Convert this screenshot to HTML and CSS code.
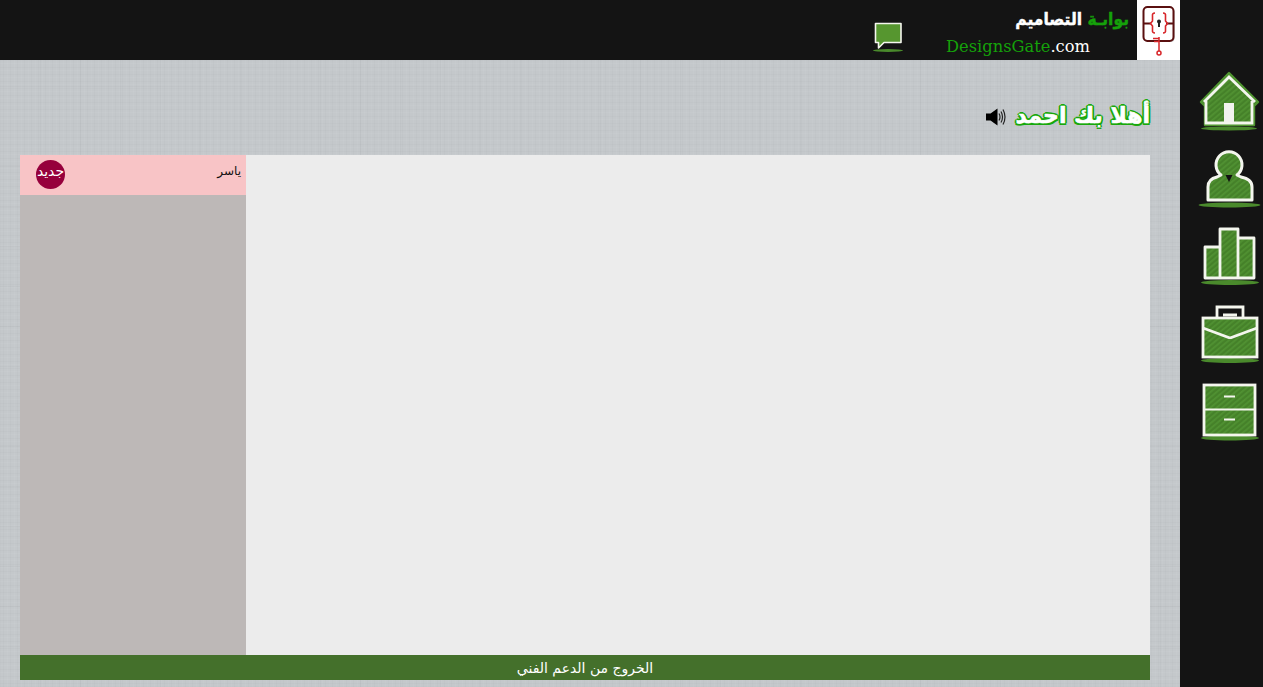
FILE: index.html
```html
<!DOCTYPE html>
<html lang="ar">
<head>
<meta charset="utf-8">
<title>بوابة التصاميم</title>
<link rel="stylesheet" href="styles.css">
</head>
<body>
<svg class="defs" width="0" height="0" aria-hidden="true">
  <defs>
    <pattern id="scribble" width="4" height="4" patternUnits="userSpaceOnUse" patternTransform="rotate(-40)">
      <rect width="4" height="4" fill="#4a892c"/>
      <rect y=".5" width="4" height="1" fill="#3f7a25"/>
      <rect y="2.500" width="4" height=".8" fill="#589a38"/>
    </pattern>
    <filter id="chalk" x="-10%" y="-10%" width="120%" height="120%">
      <feTurbulence type="fractalNoise" baseFrequency=".4" numOctaves="2" seed="4" result="n"/>
      <feDisplacementMap in="SourceGraphic" in2="n" scale="1.400" xChannelSelector="R" yChannelSelector="G"/>
      <feGaussianBlur stdDeviation=".45"/>
    </filter>
  </defs>
</svg>
<div class="page">
  <div class="main">
    <header class="topbar">
      <svg class="chat" width="32" height="32" viewBox="0 0 32 32">
        <ellipse cx="16" cy="29.500" rx="15" ry="1.500" fill="#4a8a2c"/>
        <path d="M3.500 2.500H29V21.500H12L6.500 27V21.500H3.500Z" fill="#56962f" stroke="#f4f6ee" stroke-width="1.600" stroke-linejoin="round"/>
      </svg>
      <div class="brand">
        <div class="brand-ar"><span class="g">بوابـة</span> التصاميم</div>
        <div class="brand-en" dir="ltr"><span class="g">DesignsGate</span>.com</div>
      </div>
      <div class="logo">
        <svg width="43" height="60" viewBox="0 0 43 60">
          <rect x="7.500" y="8" width="30" height="34" rx="4" fill="#bbb"/>
          <rect x="6.500" y="7" width="30" height="34" rx="4" fill="#fff" stroke="#5a1010" stroke-width="2"/>
          <path d="M7 23.500H14M29 23.500H36" stroke="#5a1010" stroke-width="2" fill="none"/>
          <path d="M18 13Q15 13 15.500 16V21L13.500 23.500L15.500 26V30Q15 33 18 33M26 13Q29 13 28.500 16V21L30.500 23.500L28.500 26V30Q29 33 26 33" stroke="#d8262a" stroke-width="1.600" fill="none"/>
          <circle cx="22" cy="21.500" r="2" fill="#222"/>
          <rect x="21" y="22" width="2" height="5" fill="#222"/>
          <path d="M22 37V51M16 38.500H22M17 41.500H22" stroke="#d8262a" stroke-width="1.500" fill="none"/>
          <circle cx="22" cy="53" r="2" fill="#fff" stroke="#d8262a" stroke-width="1.500"/>
        </svg>
      </div>
    </header>
    <section class="content">
      <div class="welcome">
        <h1 class="welcome-text">أهلا بك احمد</h1>
        <svg class="speaker" width="22" height="22" viewBox="0 0 22 22">
          <path d="M1 7.500H5.500L12.500 2.500V19.500L5.500 14.500H1Z" fill="#000"/>
          <path d="M14 7.500Q16 11 14 14.500M16 5.500Q19 11 16 16.500M18 3.500Q22 11 18 18.500" stroke="#222" stroke-width="1.200" fill="none"/>
        </svg>
      </div>
      <div class="panel">
        <div class="panel-body">
          <aside class="list">
            <div class="row">
              <span class="badge">جديد</span>
              <span class="row-name">ياسر</span>
            </div>
          </aside>
          <div class="view"></div>
        </div>
        <div class="panel-foot">الخروج من الدعم الفني</div>
      </div>
    </section>
  </div>
  <nav class="side">
    <svg class="nav-icon" width="63" height="60" viewBox="0 0 63 60">
      <ellipse cx="31" cy="57.500" rx="28" ry="2" fill="#4a8a2c"/>
      <path d="M3 31L31 2L60 31L56 35V54H7V35Z" fill="url(#scribble)" stroke="#4f9430" stroke-width="2.400" stroke-linejoin="round"/>
      <path d="M6 31L31 6L57 31M8 30V52H54V30" fill="none" stroke="#f4f6ee" stroke-width="2.800" filter="url(#chalk)"/>
      <rect x="26" y="32" width="10" height="19" fill="#f2f2ee" filter="url(#chalk)"/>
    </svg>
    <svg class="nav-icon" width="63" height="60" viewBox="0 0 63 60">
      <ellipse cx="31.500" cy="56" rx="31" ry="2.500" fill="#4a8a2c"/>
      <path d="M10 51V38Q10 30 19 28L23 26A13 13 0 1 1 39 26L43 28Q54 30 54 38V51Z" fill="url(#scribble)" stroke="#f4f6ee" stroke-width="3" stroke-linejoin="round" filter="url(#chalk)"/>
      <path d="M27.500 26H34.500L31 33Z" fill="#111"/>
    </svg>
    <svg class="nav-icon" width="63" height="60" viewBox="0 0 63 60">
      <ellipse cx="32" cy="55.500" rx="29" ry="2.500" fill="#4a8a2c"/>
      <path d="M7 20H22V2H40V11H56V51H7Z" fill="url(#scribble)"/>
      <path d="M7 20H22V51H7ZM22 2H40V51H22ZM40 11H56V51H40Z" fill="none" stroke="#f4f6ee" stroke-width="2.800" stroke-linejoin="round" filter="url(#chalk)"/>
    </svg>
    <svg class="nav-icon" width="63" height="60" viewBox="0 0 63 60">
      <ellipse cx="32" cy="55.500" rx="29" ry="2.500" fill="#4a8a2c"/>
      <path d="M19 13V2H45V13M25 10H39" fill="none" stroke="#f4f6ee" stroke-width="2.800" filter="url(#chalk)"/>
      <rect x="5" y="13" width="54" height="39" fill="url(#scribble)" stroke="#f4f6ee" stroke-width="2.800" filter="url(#chalk)"/>
      <path d="M5 23L32 33L59 23" fill="none" stroke="#f4f6ee" stroke-width="2.800" filter="url(#chalk)"/>
    </svg>
    <svg class="nav-icon" width="63" height="60" viewBox="0 0 63 60">
      <ellipse cx="32" cy="55" rx="29" ry="2.500" fill="#4a8a2c"/>
      <rect x="6" y="2" width="51" height="50" fill="url(#scribble)" stroke="#f4f6ee" stroke-width="2.800" filter="url(#chalk)"/>
      <path d="M6 26.500H57M26 13.500H37M26 36.500H37" stroke="#f4f6ee" stroke-width="2" fill="none" filter="url(#chalk)"/>
    </svg>
  </nav>
</div>
</body>
</html>
```
FILE: styles.css
```css
* { box-sizing: border-box; }
html, body { margin: 0; height: 100%; overflow: hidden; }
body { font-family: "DejaVu Sans", "Noto Sans", sans-serif; background: #141414; }
.defs { position: absolute; }
.page { display: flex; height: 687px; }
.main {
  width: 1180px;
  display: flex;
  flex-direction: column;
  background-color: #c4c8cb;
  background-image:
    repeating-linear-gradient(90deg, rgba(255,255,255,.04) 0 1px, transparent 1px 3px, rgba(0,0,0,.015) 3px 4px, transparent 4px 7px),
    repeating-linear-gradient(0deg, rgba(255,255,255,.04) 0 1px, transparent 1px 3px, rgba(0,0,0,.015) 3px 4px, transparent 4px 7px),
    repeating-linear-gradient(90deg, rgba(0,0,0,.02) 0 1px, transparent 1px 40px),
    repeating-linear-gradient(0deg, rgba(0,0,0,.02) 0 1px, transparent 1px 40px);
}
.topbar {
  height: 60px;
  background: #141414;
  display: flex;
  justify-content: flex-end;
  align-items: stretch;
  flex: none;
}
.chat { margin: 21px 42px 0 0; }
.brand { width: 191px; color: #fff; }
.brand-ar {
  direction: rtl;
  font-family: "DejaVu Sans Condensed", "DejaVu Sans", sans-serif;
  font-size: 17.300px;
  font-weight: 700;
  line-height: 26px;
  margin: 6px 8px 0 0;
  white-space: nowrap;
  -webkit-text-stroke: .4px currentColor;
}
.brand-en { font-family: "DejaVu Serif", serif; font-size: 16.300px; line-height: 22px; margin: 4px 0 0 0; }
.g { color: #15a10a; }
.logo { width: 43px; background: #fff; }
.logo svg { display: block; }
.content { flex: 1; padding: 0 30px 7px 20px; display: flex; flex-direction: column; }
.welcome { height: 95px; padding-top: 35px; display: flex; flex-direction: row-reverse; align-items: flex-start; gap: 9px; }
.welcome-text {
  margin: 0;
  direction: rtl;
  font-size: 22px;
  line-height: 42px;
  font-weight: 700;
  color: #fff;
  -webkit-text-stroke: .6px #fff;
  text-shadow: 2px 0 #18a80c, -2px 0 #18a80c, 0 2px #18a80c, 0 -2px #18a80c, 1.500px 1.500px #18a80c, -1.500px -1.500px #18a80c, 1.500px -1.500px #18a80c, -1.500px 1.500px #18a80c;
}
.speaker { margin-top: 11px; }
.panel { flex: 1; display: flex; flex-direction: column; }
.panel-body { flex: 1; display: flex; }
.view { flex: 1; background: #ececec; }
.list { width: 226px; background: #bdb8b7; }
.row {
  height: 40px;
  background: #f8c4c6;
  display: flex;
  justify-content: space-between;
  padding: 5px 5px 0 16px;
}
.row-name { direction: rtl; font-size: 12px; line-height: 22px; color: #111; }
.badge {
  width: 29px;
  height: 29px;
  border-radius: 50%;
  background: #96003c;
  color: #fff;
  direction: rtl;
  font-size: 14px;
  line-height: 22px;
  text-align: center;
  white-space: nowrap;
}
.panel-foot {
  height: 25px;
  padding-top: 1px;
  background: #44702b;
  color: #fff;
  direction: rtl;
  font-size: 14px;
  line-height: 25px;
  text-align: center;
}
.side {
  width: 83px;
  background: #141414;
  display: flex;
  flex-direction: column;
  align-items: flex-start;
  padding: 71px 0 0 18px;
  gap: 18px;
}
.nav-icon { display: block; flex: none; }
```
